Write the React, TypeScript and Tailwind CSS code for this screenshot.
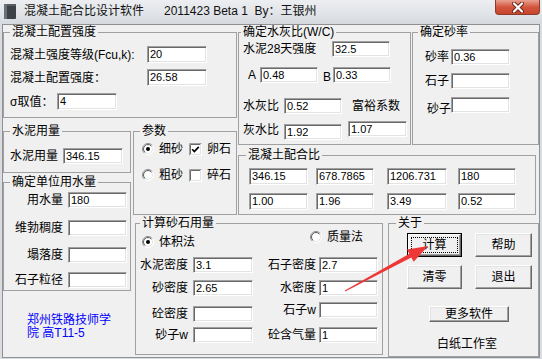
import React from "react"

type EditProps = { v?: string; c: string }

const Edit: React.FC<EditProps> = ({ v = "", c }) => (
  <div
    className={`${c} shrink-0 flex items-center pl-[2px] bg-white border border-t-[#a0a0a0] border-l-[#a0a0a0] border-r-white border-b-white shadow-[inset_1px_1px_0_#696969,inset_-1px_-1px_0_#e3e3e3] text-[11px] leading-none text-black font-['Liberation_Sans',sans-serif] whitespace-nowrap`}
  >
    {v}
  </div>
)

type GroupProps = { title: string; lg: string; c: string; children?: React.ReactNode }

const Group: React.FC<GroupProps> = ({ title, lg, c, children }) => (
  <fieldset className={`${c} min-w-0 border border-[#a0a0a0]`}>
    <legend className={`${lg} px-[2px] text-[12px] leading-[14px] whitespace-nowrap`}>{title}</legend>
    {children}
  </fieldset>
)

const Radio: React.FC<{ on?: boolean }> = ({ on }) => (
  <svg width="12" height="12" viewBox="0 0 12 12" className="shrink-0">
    <defs>
      <linearGradient id="ro" x1="0" y1="0" x2="1" y2="1">
        <stop offset="0.45" stopColor="#8a8a8a" />
        <stop offset="0.6" stopColor="#ffffff" />
      </linearGradient>
      <linearGradient id="ri" x1="0" y1="0" x2="1" y2="1">
        <stop offset="0.45" stopColor="#5a5a5a" />
        <stop offset="0.6" stopColor="#e3e3e3" />
      </linearGradient>
    </defs>
    <circle cx="6" cy="6" r="5.5" fill="#fff" stroke="url(#ro)" />
    <circle cx="6" cy="6" r="4.5" fill="#fff" stroke="url(#ri)" />
    {on && <circle cx="6" cy="6" r="2" fill="#000" />}
  </svg>
)

const Check: React.FC<{ on?: boolean }> = ({ on }) => (
  <svg width="13" height="13" viewBox="0 0 13 13" className="shrink-0">
    <rect x="0" y="0" width="13" height="13" fill="#fff" />
    <path d="M0.5 12.5 V0.5 H12.5" stroke="#a0a0a0" fill="none" />
    <path d="M1.5 11.5 V1.5 H11.5" stroke="#696969" fill="none" />
    <path d="M1.5 11.5 H11.5 V1.5" stroke="#e3e3e3" fill="none" />
    {on && <path d="M3.2 6.2 L5.3 8.6 L9.8 3.8" stroke="#000" strokeWidth="1.7" fill="none" />}
  </svg>
)

type BtnProps = { t: string; c: string; def?: boolean }

const Btn: React.FC<BtnProps> = ({ t, c, def }) =>
  def ? (
    <div className={`${c} shrink-0 flex border border-black`}>
      <div className="flex-1 flex p-[2px] bg-[#f0f0f0] border border-t-white border-l-white border-r-[#696969] border-b-[#696969] shadow-[inset_-1px_-1px_0_#a0a0a0]">
        <div className="flex-1 flex items-center justify-center border border-dotted border-black">{t}</div>
      </div>
    </div>
  ) : (
    <div
      className={`${c} shrink-0 flex items-center justify-center bg-[#f0f0f0] border border-t-white border-l-white border-r-[#696969] border-b-[#696969] shadow-[inset_-1px_-1px_0_#a0a0a0,inset_1px_1px_0_#e3e3e3]`}
    >
      {t}
    </div>
  )

const TitleBar: React.FC = () => (
  <div className="h-[24px] flex items-start bg-linear-to-b from-[#eceef1] via-[#e2e5e9] to-[#d6dadf]">
    <svg width="12" height="15" viewBox="0 0 12 15" className="ml-[4px] mt-[4px] shrink-0">
      <rect x="0" y="0" width="12" height="15" rx="1" fill="#3d4248" />
      <rect x="0" y="0" width="3" height="15" fill="#6a7077" />
      <rect x="3" y="0" width="9" height="2" fill="#575d63" />
    </svg>
    <div className="ml-[8px] mt-[4px] text-[12px] leading-[15px] text-[#111] whitespace-pre">
      混凝土配合比设计软件      2011423 Beta 1  By：王银州
    </div>
    <div className="ml-auto mr-[2px] w-[45px] h-[15px] rounded-b-[4px] border border-t-0 border-[#8d3a2c] bg-linear-to-b from-[#e8a192] via-[#d2553d] to-[#c7452c] flex items-center justify-center">
      <svg width="14" height="11" viewBox="0 0 14 11">
        <path d="M3 1.5 L11 9.5 M11 1.5 L3 9.5" stroke="#6e2418" strokeWidth="4" strokeLinecap="round" />
        <path d="M3 1.5 L11 9.5 M11 1.5 L3 9.5" stroke="#fff" strokeWidth="2.2" strokeLinecap="round" />
      </svg>
    </div>
  </div>
)

const App: React.FC = () => {
  return (
    <div className="relative w-[542px] h-[359px] overflow-hidden bg-[#d9dde2] text-[12px] leading-[14px] text-black font-['Liberation_Sans','Noto_Sans_CJK_SC',sans-serif]">
      <TitleBar />
      <div className="ml-[2px] w-[538px] border border-[#8e9092] bg-[#f0f0f0]">
        <div className="grid grid-cols-[128px_2px_2px_102px_1px_145px_5px_23px_1px_124px_3px] grid-rows-[93px_6px_21px_3px_25px_2px_40px_1px_75px_66px]">
          {/* 混凝土配置强度 */}
          <Group title="混凝土配置强度" lg="ml-[6px]" c="col-[1/5] row-[1/2]">
            <div className="pt-[7px] flex flex-col">
              <div className="flex items-center">
                <span className="w-[143px] pl-[6px] whitespace-nowrap">混凝土强度等级(Fcu,k):</span>
                <Edit v="20" c="w-[60px] h-[17px]" />
              </div>
              <div className="mt-[6px] flex items-center">
                <span className="w-[143px] pl-[6px] whitespace-nowrap">混凝土配置强度：</span>
                <Edit v="26.58" c="w-[60px] h-[17px]" />
              </div>
              <div className="mt-[7px] flex items-center">
                <span className="w-[53px] pl-[6px] whitespace-nowrap">σ取值：</span>
                <Edit v="4" c="w-[60px] h-[17px]" />
              </div>
            </div>
          </Group>

          {/* 确定水灰比 */}
          <Group title="确定水灰比(W/C)" lg="ml-[2px]" c="col-[6/9] row-[1/4]">
            <div className="pt-[2px] flex flex-col">
              <div className="flex items-center">
                <span className="w-[93px] pl-[4px] whitespace-nowrap">水泥28天强度</span>
                <Edit v="32.5" c="w-[58px] h-[16px]" />
              </div>
              <div className="mt-[9px] flex items-center">
                <span className="w-[21px] pl-[9px]">A</span>
                <Edit v="0.48" c="w-[58px] h-[16px]" />
                <span className="ml-[5px] w-[10px] mt-[4px]">B</span>
                <Edit v="0.33" c="w-[58px] h-[16px]" />
              </div>
              <div className="mt-[14px] flex items-center">
                <span className="w-[45px] pl-[4px] whitespace-nowrap">水灰比</span>
                <Edit v="0.52" c="w-[58px] h-[16px]" />
                <span className="ml-[10px] whitespace-nowrap">富裕系数</span>
              </div>
              <div className="mt-[7px] flex items-start">
                <span className="w-[45px] pl-[4px] mt-[2px] whitespace-nowrap">灰水比</span>
                <Edit v="1.92" c="w-[58px] h-[16px] mt-[3px]" />
                <Edit v="1.07" c="w-[59px] h-[16px] ml-[6px]" />
              </div>
            </div>
          </Group>

          {/* 确定砂率 */}
          <Group title="确定砂率" lg="ml-[5px]" c="col-[10/12] row-[1/4]">
            <div className="pt-[10px] flex flex-col">
              <div className="flex items-center">
                <span className="w-[38px] pl-[12px] whitespace-nowrap">砂率</span>
                <Edit v="0.36" c="w-[59px] h-[16px]" />
              </div>
              <div className="mt-[8px] flex items-center">
                <span className="w-[38px] pl-[12px] whitespace-nowrap">石子</span>
                <Edit c="w-[59px] h-[16px]" />
              </div>
              <div className="mt-[8px] flex items-start">
                <span className="w-[38px] pl-[14px] mt-[5px] whitespace-nowrap">砂子</span>
                <Edit c="w-[59px] h-[16px]" />
              </div>
            </div>
          </Group>

          {/* 水泥用量 */}
          <Group title="水泥用量" lg="ml-[6px]" c="col-[1/2] row-[3/6]">
            <div className="pt-[10px] flex items-center">
              <span className="w-[59px] pl-[6px] whitespace-nowrap">水泥用量</span>
              <Edit v="346.15" c="w-[60px] h-[16px]" />
            </div>
          </Group>

          {/* 参数 */}
          <Group title="参数" lg="ml-[6px]" c="col-[3/5] row-[3/8]">
            <div className="pt-[3px] flex flex-col">
              <div className="h-[16px] flex items-center">
                <span className="ml-[8px]"><Radio on /></span>
                <span className="ml-[5px]">细砂</span>
                <span className="ml-[6px]"><Check on /></span>
                <span className="ml-[5px]">卵石</span>
              </div>
              <div className="mt-[10px] h-[16px] flex items-center">
                <span className="ml-[8px]"><Radio /></span>
                <span className="ml-[5px]">粗砂</span>
                <span className="ml-[6px]"><Check /></span>
                <span className="ml-[5px]">碎石</span>
              </div>
            </div>
          </Group>

          {/* 混凝土配合比 */}
          <Group title="混凝土配合比" lg="ml-[7px]" c="col-[6/11] row-[5/8]">
            <div className="pt-[6px] flex flex-col">
              <div className="flex">
                <Edit v="346.15" c="w-[59px] h-[17px] ml-[10px]" />
                <Edit v="678.7865" c="w-[58px] h-[17px] ml-[8px]" />
                <Edit v="1206.731" c="w-[60px] h-[17px] ml-[13px]" />
                <Edit v="180" c="w-[58px] h-[17px] ml-[11px]" />
              </div>
              <div className="mt-[8px] flex">
                <Edit v="1.00" c="w-[59px] h-[17px] ml-[10px]" />
                <Edit v="1.96" c="w-[58px] h-[17px] ml-[8px]" />
                <Edit v="3.49" c="w-[60px] h-[17px] ml-[13px]" />
                <Edit v="0.52" c="w-[58px] h-[17px] ml-[11px]" />
              </div>
            </div>
          </Group>

          {/* 确定单位用水量 */}
          <Group title="确定单位用水量" lg="ml-[6px]" c="col-[1/2] row-[7/10]">
            <div className="pt-[3px] flex flex-col">
              <div className="flex items-center">
                <span className="w-[59px] text-right whitespace-nowrap">用水量</span>
                <Edit v="180" c="w-[59px] h-[16px] ml-[5px]" />
              </div>
              <div className="mt-[12px] flex items-center">
                <span className="w-[59px] text-right whitespace-nowrap">维勃稠度</span>
                <Edit c="w-[59px] h-[16px] ml-[5px]" />
              </div>
              <div className="mt-[11px] flex items-center">
                <span className="w-[59px] text-right whitespace-nowrap">塌落度</span>
                <Edit c="w-[59px] h-[16px] ml-[5px]" />
              </div>
              <div className="mt-[9px] flex items-center">
                <span className="w-[59px] text-right whitespace-nowrap">石子粒径</span>
                <Edit c="w-[59px] h-[16px] ml-[5px]" />
              </div>
            </div>
          </Group>

          <div className="col-[1/3] row-[10/11] pl-[24px] pt-[23px]">
            <p className="w-[90px] text-[12px] leading-[13px] text-[#0000ff]">郑州铁路技师学院 高T11-5</p>
          </div>

          {/* 计算砂石用量 */}
          <Group title="计算砂石用量" lg="ml-[4px]" c="col-[4/7] row-[9/11] mb-[2px]">
            <div className="h-[27px] flex items-start">
              <div className="mt-[5px] ml-[6px] h-[14px] flex items-center">
                <Radio on />
                <span className="ml-[5px]">体积法</span>
              </div>
              <div className="ml-[115px] h-[14px] flex items-center">
                <Radio />
                <span className="ml-[5px]">质量法</span>
              </div>
            </div>
            <div className="flex items-start">
              <div className="flex flex-col">
                <div className="flex items-center">
                  <span className="w-[52px] text-right whitespace-nowrap">水泥密度</span>
                  <Edit v="3.1" c="w-[60px] h-[16px] ml-[5px]" />
                </div>
                <div className="mt-[7px] flex items-center">
                  <span className="w-[52px] text-right whitespace-nowrap">砂密度</span>
                  <Edit v="2.65" c="w-[60px] h-[16px] ml-[5px]" />
                </div>
                <div className="mt-[10px] flex items-center">
                  <span className="w-[52px] text-right whitespace-nowrap">砼密度</span>
                  <Edit c="w-[60px] h-[16px] ml-[5px]" />
                </div>
                <div className="mt-[5px] flex items-center">
                  <span className="w-[52px] text-right whitespace-nowrap">砂子w</span>
                  <Edit c="w-[60px] h-[16px] ml-[5px]" />
                </div>
              </div>
              <div className="ml-[5px] flex flex-col">
                <div className="flex items-center">
                  <span className="w-[58px] text-right whitespace-nowrap">石子密度</span>
                  <Edit v="2.7" c="w-[59px] h-[16px] ml-[3px]" />
                </div>
                <div className="mt-[7px] flex items-center">
                  <span className="w-[58px] text-right whitespace-nowrap">水密度</span>
                  <Edit v="1" c="w-[59px] h-[16px] ml-[3px]" />
                </div>
                <div className="mt-[6px] flex items-center">
                  <span className="w-[58px] text-right whitespace-nowrap">石子w</span>
                  <Edit c="w-[59px] h-[16px] ml-[3px]" />
                </div>
                <div className="mt-[9px] flex items-center">
                  <span className="w-[58px] text-right whitespace-nowrap">砼含气量</span>
                  <Edit v="1" c="w-[59px] h-[16px] ml-[3px]" />
                </div>
              </div>
            </div>
          </Group>

          {/* 关于 */}
          <Group title="关于" lg="ml-[7px]" c="col-[8/12] row-[9/11]">
            <div className="pt-[3px] flex flex-col">
              <div className="flex">
                <Btn t="计算" c="w-[55px] h-[24px] ml-[18px]" def />
                <Btn t="帮助" c="w-[57px] h-[24px] ml-[13px]" />
              </div>
              <div className="mt-[8px] flex">
                <Btn t="清零" c="w-[55px] h-[24px] ml-[18px]" />
                <Btn t="退出" c="w-[57px] h-[24px] ml-[13px]" />
              </div>
              <div className="mt-[17px] flex">
                <Btn t="更多软件" c="w-[80px] h-[16px] ml-[40px]" />
              </div>
              <div className="mt-[15px] pl-[48px] whitespace-nowrap">白纸工作室</div>
            </div>
          </Group>
        </div>
      </div>

      {/* annotation arrow */}
      <svg
        className="absolute left-0 top-0 pointer-events-none"
        width="542"
        height="359"
        viewBox="0 0 542 359"
      >
        <polygon
          points="344.8,290.6 409.3,253.8 407,249.4 428,246 413.7,261.8 411.3,257.4 345.2,291.4"
          fill="#ee3838"
        />
      </svg>
    </div>
  )
}

export default App
